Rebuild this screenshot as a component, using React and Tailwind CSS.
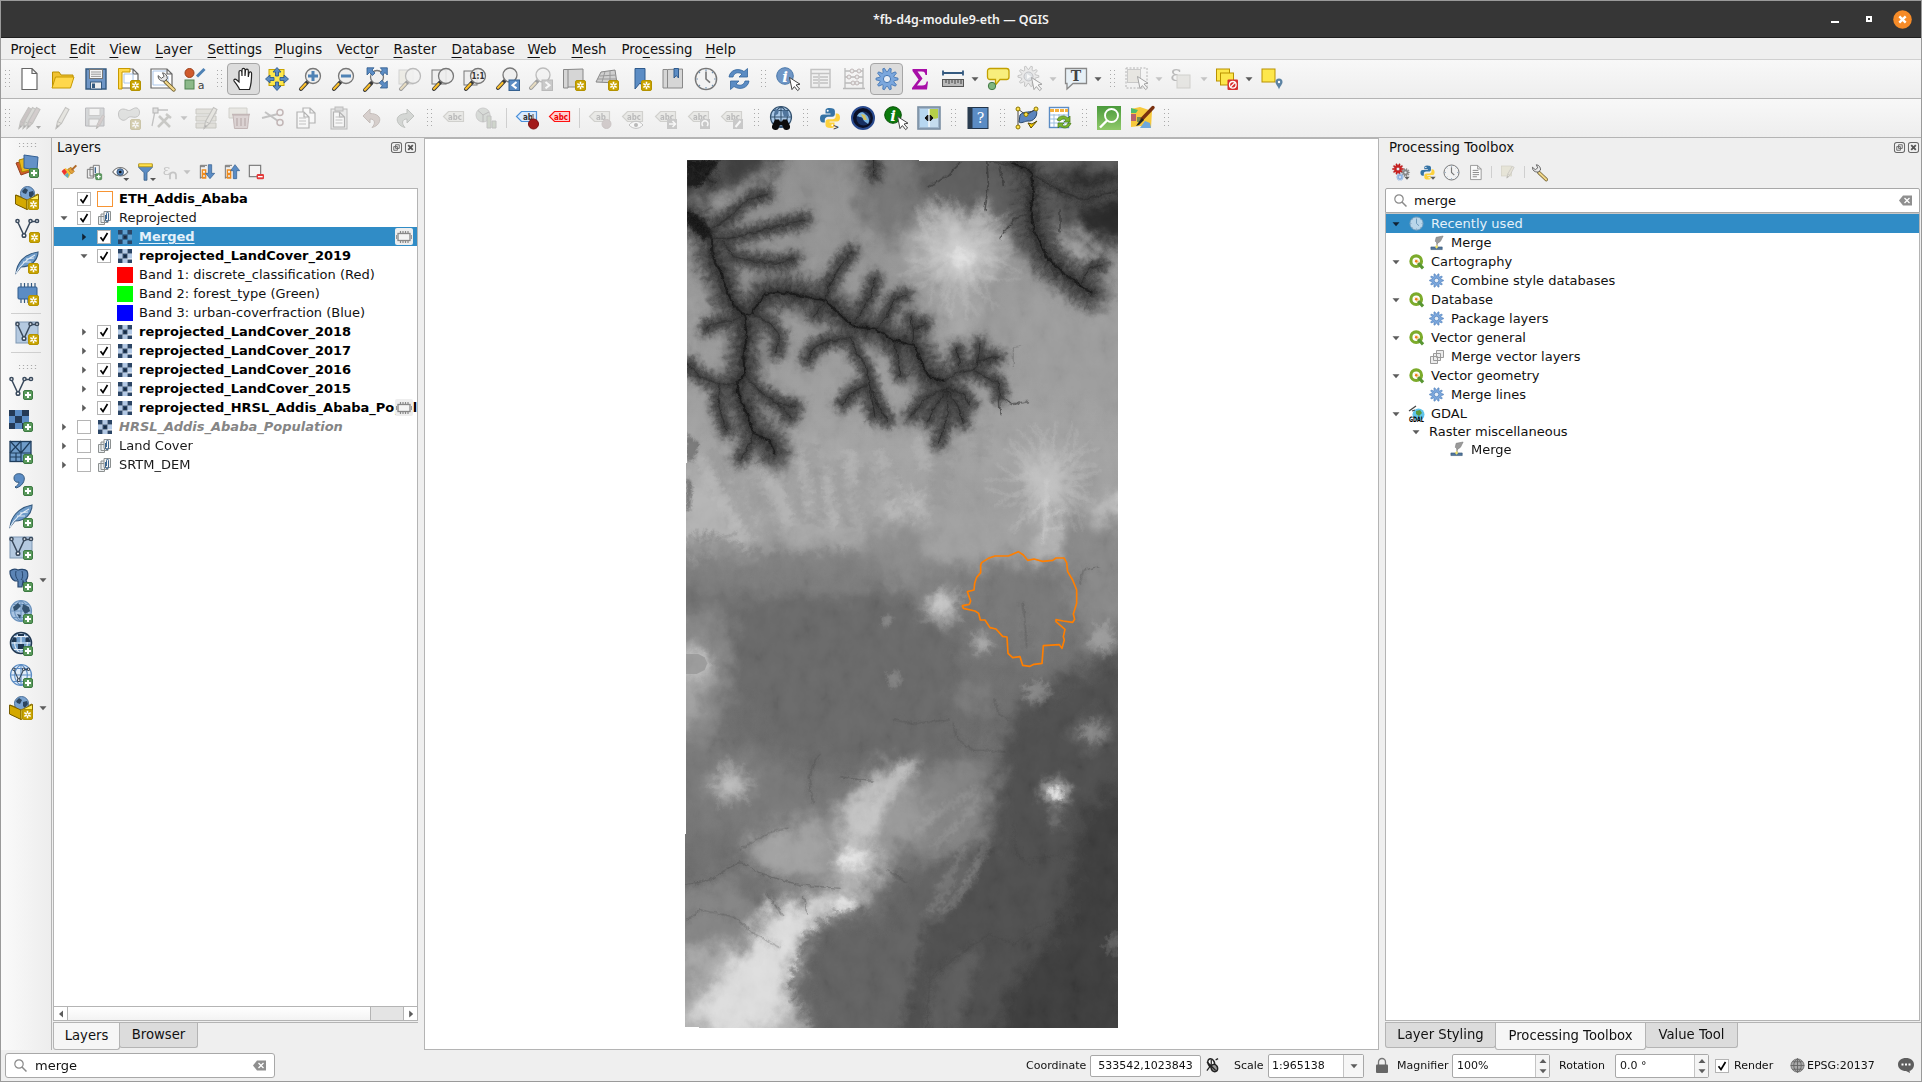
import React from "react";

/* ---------- small building blocks ---------- */

const S = ({ w = 24, h, vb, children, className = "" }) => (
  <svg width={w} height={h || w} viewBox={vb || "0 0 24 24"} fill="none" className={"block shrink-0 overflow-visible " + className}>
    {children}
  </svg>
);

const Star = ({ x = 13, y = 13 }) => (
  <g transform={`translate(${x} ${y})`}>
    <rect x="0.5" y="0.5" width="10" height="10" rx="1.5" fill="#c9a400" stroke="#b39200" />
    <path d="M5.5 1.8v7.4M2.3 3.6l6.4 3.8M8.7 3.6L2.3 7.4" stroke="#fff" strokeWidth="1.6" />
    <circle cx="5.5" cy="5.5" r="0.9" fill="#c9a400" />
  </g>
);

const Plus = ({ x = 14, y = 14 }) => (
  <g transform={`translate(${x} ${y})`}>
    <rect x="0.5" y="0.5" width="9" height="9" rx="1.5" fill="#5a9a5c" stroke="#3d7a42" />
    <path d="M5 2v6M2 5h6" stroke="#fff" strokeWidth="2" />
  </g>
);

const Glass = ({ cx = 14, cy = 9, r = 7.5, sign }) => (
  <g>
    <path d={`M${cx - 5.5} ${cy + 6}L${cx - 12} ${cy + 13}`} stroke="#3a3a3a" strokeWidth="4" strokeLinecap="round" />
    <path d={`M${cx - 7.5} ${cy + 8}L${cx - 12} ${cy + 12.8}`} stroke="#fbc02d" strokeWidth="2.2" strokeLinecap="round" />
    <circle cx={cx} cy={cy} r={r} fill="#eeeeeee0" stroke="#777" strokeWidth="1.3" />
    {sign}
  </g>
);

const Cursor = ({ x = 12, y = 10 }) => (
  <path
    transform={`translate(${x} ${y})`}
    d="M0.5 0.5L11 7.2L7 8L10.6 12L8.6 13.6L5.4 9.6L3 12.6Z"
    fill="#fff"
    stroke="#444"
    strokeWidth="1"
  />
);

const gearPath = (() => {
  let d = "";
  const n = 10;
  for (let i = 0; i < n * 4; i++) {
    const a = ((i - 0.5) / (n * 4)) * Math.PI * 2;
    const r = i % 4 < 2 ? 11 : 7.4;
    d += (i ? "L" : "M") + (12 + r * Math.cos(a)).toFixed(2) + " " + (12 + r * Math.sin(a)).toFixed(2);
  }
  return d + "Z";
})();

const Gear = ({ w = 24, fill = "#7ba7dd", stroke = "#4476b3", className }) => (
  <S w={w} className={className}>
    <path d={gearPath} fill={fill} stroke={stroke} strokeWidth="0.9" strokeLinejoin="round" />
    <circle cx="12" cy="12" r="3.6" fill="#e8eef6" stroke={stroke} strokeWidth="1" />
  </S>
);

const Clock = ({ w = 24, face = "#f2f2f2", ring = "#777" }) => (
  <S w={w}>
    <circle cx="12" cy="12" r="10.6" fill={face} stroke={ring} strokeWidth="1.4" />
    <path d="M12 4.5V12l4 3.6" stroke={ring} strokeWidth="1.6" />
    <path d="M12 2.3v1.6M12 20.1v1.6M2.3 12h1.6M20.1 12h1.6M5 5l1 1M19 5l-1 1M5 19l1-1M19 19l-1-1" stroke="#6d8fb0" strokeWidth="1.1" />
  </S>
);

const Python = ({ w = 24, extra }) => (
  <S w={w}>
    <path d="M11.5 2C8 2 7.5 3.4 7.5 5v2.5h5v1H5.2C3 8.5 2 10 2 12.5S3.200 16.500 5 16.500h1.800v-2.700c0-1.800 1.500-3.100 3.200-3.100h4.300c1.500 0 2.600-1.200 2.600-2.700V5c0-1.800-1.600-3-5.400-3Z" fill="#3673a5" />
    <path d="M12.500 22c3.500 0 4-1.400 4-3v-2.500h-5v-1h7.300c2.200 0 3.200-1.500 3.200-4s-1.200-4-3-4h-1.300v2.700c0 1.800-1.500 3.100-3.200 3.100h-4.300c-1.500 0-2.700 1.200-2.700 2.700V19c0 1.800 1.600 3 5 3Z" fill="#fdd13d" />
    <circle cx="9.700" cy="4.800" r="1" fill="#fff" />
    <circle cx="14.300" cy="19.300" r="1" fill="#fff" />
    {extra}
  </S>
);

const Vnodes = ({ c = "#39495c" }) => (
  <g stroke={c} strokeWidth="1.5">
    <path d="M2.500 3.500L9 17.500L15.500 3.500H22" />
    <circle cx="2.500" cy="3" r="1.600" fill="#fff" />
    <circle cx="9" cy="17.500" r="1.800" fill="#fff" />
    <circle cx="15.500" cy="3" r="1.600" fill="#fff" />
    <circle cx="22" cy="3" r="1.600" fill="#fff" />
  </g>
);

const Tag = ({ text = "abc", fill = "#dddcd0", stroke = "#a9a898", color = "#777", children }) => (
  <S>
    <path d="M6.500 5.500H21.500V15.500H6.500L1.500 10.500Z" fill={fill} stroke={stroke} strokeWidth="1.200" />
    <text x="13" y="13.500" fontSize="8.500" fontWeight="bold" textAnchor="middle" fontFamily="DejaVu Sans" fill={color} textLength={text.length > 2 ? 14 : 10} lengthAdjust="spacingAndGlyphs">
      {text}
    </text>
    {children}
  </S>
);

const Globe = ({ fill = "#7aa3d0", line = "#2f4f73", children }) => (
  <S>
    <circle cx="12" cy="11" r="10.500" fill={fill} stroke={line} strokeWidth="1.200" />
    <path d="M12 .5V21.500M1.500 11H22.500M4 4.500H20M4 17.500H20M12 .5C3.500 6 3.500 16 12 21.500M12 .5C20.500 6 20.500 16 12 21.500" stroke={line} strokeWidth="1.100" />
    {children}
  </S>
);

const Bolt = () => (
  <g>
    <path d="M1 9L12 13L23 8V18L12 23L1 18Z" fill="#fff176" stroke="#8a6d00" />
    <circle cx="12.500" cy="7.500" r="7" fill="#7aa3d0" stroke="#4a6f99" />
    <path d="M7 5l3-3 3 2-2 4-3-1ZM14 6l4-1 1 3-3 4-2-2Z" fill="#2d4660" />
    <path d="M.5 9L12 14V23.500L.5 18Z" fill="#d4a900" stroke="#7a5f00" />
    <path d="M12 14L23.500 8.500V18L12 23.500Z" fill="#ffee58" stroke="#8a6d00" />
  </g>
);

const Checker = ({ w = 14, dim }) => (
  <S w={w} vb="0 0 14 14">
    <rect width="14" height="14" fill={dim ? "#308cc6" : "#ffffff"} />
    <path d="M0 4.500h4.500v5H0ZM9.500 4.500H14v5H9.500ZM4.500 9.500h5V14h-5ZM4.500 0h5v4.500h-5Z" fill={dim ? "#5f9fd0" : "#b4cae6"} />
    <path d="M0 0h4.500v4.500H0ZM9.500 0H14v4.500H9.500ZM4.500 4.500h5v5h-5ZM0 9.500h4.500V14H0ZM9.500 10.500H14V14H9.500Z" fill="#2b4566" />
    <path d="M6 6h2.500v2.500H6Z" fill="#172a40" />
  </S>
);

const GroupIcon = () => (
  <S w={16} vb="0 0 16 16">
    <path d="M1.500 6.500h6v8h-6ZM4 4h7v8.500H4Z" fill="#eceff1" stroke="#8c9090" />
    <path d="M7 1.500h6.500v9H7Z" fill="#f4f4f4" stroke="#8c9090" />
    <path d="M8.500 5v5a1.500 1.500 0 0 0 3 0V3.300a1 1 0 0 0-2 0V9" stroke="#3c6690" strokeWidth="1" />
  </S>
);

const Chip = ({ w = 16 }) => (
  <S w={w} h={14} vb="0 0 16 14">
    <rect x="2" y="3.500" width="12" height="7" fill="#f4f4f4" stroke="#888" strokeWidth="1.300" />
    <path d="M.5 5v4M15.500 5v4" stroke="#999" strokeWidth="1" />
    <path d="M4.500 3V1M7 3V1M9.500 3V1M12 3V1M4.500 13v-2M7 13v-2M9.500 13v-2M12 13v-2" stroke="#888" strokeWidth="1.200" />
  </S>
);

const Tri = ({ dir = "down", c = "#5c5c5c" }) => (
  <S w={8} vb="0 0 8 8">
    <path d={dir === "down" ? "M0.500 2.200H7.500L4 6.200Z" : dir === "up" ? "M0.500 6H7.500L4 2Z" : dir === "left" ? "M6 .5V7.500L2 4Z" : "M2.200 .5V7.500L6.200 4Z"} fill={c} />
  </S>
);

const Page = ({ x = 4, y = 1.5, w = 15, h = 21 }) => (
  <path d={`M${x} ${y}h${w - 5}l5 5v${h - 5}h${-w}Z M${x + w - 5} ${y}v5h5`} fill="#fff" stroke="#666" strokeWidth="1.200" />
);

const Pencil = ({ x = 0, c = "#d9d3bb" }) => (
  <g transform={`translate(${x} 0)`}>
    <path d="M5 22.500L6.500 15.500L14.500 1.500L18 3.500L10.500 17.500Z" fill={c} stroke="#8a867a" strokeWidth="1.100" />
    <path d="M5 22.500l1.200-3.500 2 1.200ZM6.500 15.500l4 2" fill="#555" stroke="#8a867a" />
  </g>
);

const Wrench = () => (
  <g>
    <path d="M11 12L21.500 22" stroke="#6a5a2a" strokeWidth="5" strokeLinecap="round" />
    <path d="M11.500 12.500L21.500 22" stroke="#f0d68a" strokeWidth="3" strokeLinecap="round" />
    <path d="M2 4.500c0 5 3 7 8 7l3.500-3c0-4-2-7-6-7.500l2 4.500-3.500 2.500Z" fill="#e8e8e8" stroke="#555" strokeWidth="1.200" />
  </g>
);

/* ---------- icon catalogue ---------- */

const I = {
  newp: <S><Page /></S>,
  open: <S w={25} vb="0 0 25 24"><path d="M2.500 20V4.500H9l2 3h12V10" fill="#f1c232" stroke="#b98f00" /><path d="M2 20.500L5.500 9.500H24L20.500 20.500Z" fill="#ffd84d" stroke="#c79a00" /></S>,
  save: <S><path d="M2 2H22V22H2Z" fill="#6f96c6" stroke="#34597f" strokeWidth="1.400" /><rect x="5.500" y="2.500" width="13" height="9" fill="#f5f5f5" stroke="#777" /><path d="M7 5h10M7 7.200h10M7 9.400h10" stroke="#999" /><rect x="6.500" y="15" width="11" height="7" fill="#eee" stroke="#34597f" /><rect x="8" y="16.500" width="3" height="4.500" fill="#34597f" /></S>,
  print: <S><Page x={3} y={2} w={18} h={19} /><path d="M1.500 1.500H13V5H5V22H1.500Z" fill="#ffd84d" stroke="#c79a00" /><path d="M7 7h9v9H7Z" stroke="#aac6ea" /><Star /></S>,
  layout: <S><Page x={1} y={2} w={21} h={19} /><path d="M3 4h13M3 4v14h15V9" stroke="#aac6ea" /><g transform="translate(6.500 5) scale(.8)"><Wrench /></g></S>,
  style: <S><circle cx="6.500" cy="6" r="4.500" fill="#d05a2c" stroke="#9d3f1a" /><path d="M14 9.500L21.500 2" stroke="#4f82b5" strokeWidth="3" /><rect x="2" y="13" width="9" height="9" fill="#8cb98a" stroke="#4f8250" /><text x="18" y="22" fontFamily="DejaVu Sans" fontSize="11" fill="#444" textAnchor="middle">a</text></S>,
  hand: <S><path d="M7.500 22.500c-1-3-4-6.500-5.500-8.500-.6-1.500 1-2.500 2.500-1.200L7 15V5c0-2 2.500-2 2.800 0L10 9V2.800c.2-2 2.800-2 3 0V9l.5-5.500c.3-1.900 2.700-1.700 2.800.2V10l.7-4c.5-1.700 2.600-1.400 2.600.5 0 5-.3 11-2.100 16Z" fill="#fff" stroke="#222" strokeWidth="1.200" /></S>,
  panmap: <S><rect x="4" y="2.500" width="15" height="16" fill="#fde74c" stroke="#c9a400" /><g fill="#5b8cc4" stroke="#2f5a8c" strokeWidth=".9"><path d="M12 .5l4 4.500h-2.500v4h-3V5H8ZM12 23.500l4-4.500h-2.500v-4h-3v4H8ZM.5 12L5 8v2.500h4v3H5V16ZM23.500 12L19 8v2.500h-4v3h4V16Z" /></g></S>,
  zin: <S><Glass cx={15} sign={<path d="M15 4v10M10 9h10" stroke="#4f82b5" strokeWidth="3" />} /></S>,
  zout: <S><Glass cx={15} sign={<path d="M10 9h10" stroke="#4f82b5" strokeWidth="3" />} /></S>,
  zfull: <S><Glass cx={13} cy={10} r={6.500} /><g fill="#5b8cc4" stroke="#2f5a8c" strokeWidth=".8"><path d="M3 .8h7L8 3l3 3-2.500 2.500-3-3L3 8ZM23.300 .8h-7l2 2.200-2 3 2.500 2.500 2-3L23.300 8ZM23.300 21h-7l2-2.200-3-3 2.500-2.500 3 3 2.500-2.300Z" /></g></S>,
  zsel: <S><rect x="2" y="3" width="14" height="14" fill="#e7e3c0" stroke="#aaa" /><Glass cx={16} /></S>,
  zlay: <S><rect x="2" y="3" width="14" height="14" fill="#eee" stroke="#777" /><Glass cx={16} /></S>,
  z11: <S><rect x="1" y="4" width="13" height="14" fill="#eee" stroke="#777" /><Glass cx={15} sign={<text x="15" y="12.200" fontFamily="DejaVu Sans" fontWeight="bold" fontSize="8.500" fill="#333" textAnchor="middle" textLength="13" lengthAdjust="spacingAndGlyphs">1:1</text>} /></S>,
  zlast: <S><Glass cx={14} cy={8} r={7} /><rect x="13" y="13" width="10.500" height="10.500" fill="#5b8cc4" stroke="#35608f" /><path d="M20.500 15l-4 3.200 4 3.200" stroke="#fff" strokeWidth="2" /></S>,
  znext: <S><Glass cx={14} cy={8} r={7} /><rect x="13" y="13" width="10.500" height="10.500" fill="#999" stroke="#777" /><path d="M16.500 15l4 3.200-4 3.200" stroke="#fff" strokeWidth="2" /></S>,
  newmap: <S><path d="M1.500 2.500H6V21H1.500ZM6 2.500l15-.5v18H6" fill="#d6d6d6" stroke="#888" /><Star /></S>,
  map3d: <S><path d="M6 5L20 3L22 16L1 15Z" fill="#cfcfcf" stroke="#888" /><path d="M5 9l16-1M3 12l18 0M10 4.500L7 15M15 4l0 12" stroke="#999" /><Star /></S>,
  bmnew: <S><path d="M7 1.500H17V22L12 16L7 22Z" fill="#5b8cc4" stroke="#2f5a8c" /><Star x={13} y={13} /></S>,
  bm: <S><path d="M2 2.500H6.500V21H2ZM6.500 2.500l15-.5v19h-15" fill="#d6d6d6" stroke="#888" /><path d="M13 1.500h4.500V11l-2.200-2.500L13 11Z" fill="#5b8cc4" stroke="#2f5a8c" /></S>,
  clock: <Clock />,
  refresh: <S><path d="M2 10C3 3 11 .5 17 4.500L20.500 1.500V10H12L15 7C11 4.500 7 6 6 10Z" fill="#5b8cc4" stroke="#33669c" strokeWidth=".8" /><path d="M22 14C21 21 13 23.500 7 19.500L3.500 22.500V14H12L9 17c4 2.500 8 1 9-3Z" fill="#5b8cc4" stroke="#33669c" strokeWidth=".8" /></S>,
  ident: <S><circle cx="9" cy="9" r="8.300" fill="#6f96c6" stroke="#4a78aa" /><text x="9" y="14.500" fontFamily="DejaVu Serif" fontStyle="italic" fontWeight="bold" fontSize="15" fill="#fff" textAnchor="middle">i</text><Cursor x={13} y={10} /></S>,
  table: <S><rect x="2" y="2.500" width="19" height="18" fill="#eee" stroke="#888" strokeWidth="1.500" /><path d="M2 6.500h19M4 10h5M11 10h8M4 13h5M11 13h8M4 16h5M11 16h8M10 7v13" stroke="#888" strokeWidth="1.300" /></S>,
  abacus: <S><path d="M3 1v21M21 1v21M3 4h18M3 10h18M3 16h18M1 21.500h22" stroke="#777" strokeWidth="1.300" /><g fill="#ddd" stroke="#966" ><circle cx="10" cy="4" r="2" /><circle cx="17" cy="4" r="2" /><circle cx="7" cy="10" r="2" /><circle cx="11" cy="16" r="2" /><circle cx="15" cy="16" r="2" /><circle cx="15" cy="10" r="2" /></g></S>,
  gear: <Gear />,
  sigma: <S><path d="M4.500 2H19V8H17.500C17 5 16 4.500 13 4.500H9.500L14.500 11.500L9 18.500H14c3 0 4-1 4.700-4H20L19 22.500H4V21L10.500 12.500L4.500 4Z" fill="#a80fa8" /></S>,
  measure: <S><path d="M2 6h20M2 3.500v5M22 3.500v5" stroke="#34597f" strokeWidth="1.800" /><rect x="1.500" y="12.500" width="21" height="7" fill="#b9b9b9" stroke="#555" /><path d="M5 13v3M8 13v4M11 13v3M14 13v4M17 13v3M20 13v4" stroke="#444" /></S>,
  tip: <S><path d="M4 1.500H20.500A2.500 2.500 0 0 1 23 4V10A2.500 2.500 0 0 1 20.500 12.500H14L9.500 18V12.500H4A2.500 2.500 0 0 1 1.500 10V4A2.500 2.500 0 0 1 4 1.500Z" fill="#f8ee7c" stroke="#c2a000" strokeWidth="1.300" /><circle cx="6" cy="19" r="3.700" fill="#7fb57f" stroke="#437a46" /></S>,
  action: <S><path d={gearPath} fill="#ddd" stroke="#888" transform="translate(-2 -2) scale(.95)" /><circle cx="9.500" cy="9.500" r="4.500" fill="#bcd" stroke="#889" /><path d="M8 7v5l4-2.500Z" fill="#fff" /><Cursor x={12} y={10} /></S>,
  text: <S><path d="M1.500 1.500H22.500V16.500H9L3 22V16.500H1.500Z" fill="#e7f0f6" stroke="#888" strokeWidth="1.300" /><text x="12" y="14" fontFamily="DejaVu Serif" fontWeight="bold" fontSize="14" fill="#444" textAnchor="middle">T</text></S>,
  select: <S><rect x="2.500" y="2.500" width="13" height="13" fill="#ded6bd" stroke="#999" /><path d="M1 1h21v20H1Z" stroke="#666" strokeDasharray="2 1.500" /><Cursor x={12} y={9} /></S>,
  eps: <S><text x="6" y="14" fontFamily="DejaVu Serif" fontSize="22" fill="#777" textAnchor="middle">ε</text><rect x="7" y="8" width="13" height="13" fill="#dad6c6" stroke="#aaa696" /></S>,
  desel: <S><rect x="1.500" y="2" width="13" height="12" fill="#fde74c" stroke="#b99200" /><rect x="5.500" y="6" width="13" height="12" fill="#fde74c" stroke="#b99200" /><rect x="12.500" y="12.500" width="10.500" height="10.500" rx="1" fill="#d62f2f" /><circle cx="17.800" cy="17.800" r="3.300" stroke="#fff" strokeWidth="1.300" /><path d="M15.500 20l4.600-4.600" stroke="#fff" strokeWidth="1.300" /></S>,
  selpin: <S><rect x="2" y="2" width="13" height="13" fill="#fde74c" stroke="#b99200" /><path d="M19 11.500a3.500 3.500 0 0 1 3.500 3.500c0 2.500-2.500 4-3.500 7.500-1-3.500-3.500-5-3.500-7.500a3.500 3.500 0 0 1 3.500-3.500Z" fill="#5c83a3" /><circle cx="19" cy="15" r="1.200" fill="#fff" /></S>,
  pencils: <S><Pencil x={-4} c="#a88" /><Pencil x={0} c="#bba" /><Pencil x={4} c="#b99" /><path d="M18 20h5l-2.500 3Z" fill="#555" /></S>,
  pencil: <S><Pencil /></S>,
  saveEd: <S><path d="M1.500 2H20V20H1.500Z" fill="#aab4bd" stroke="#778" /><rect x="5" y="2.500" width="11" height="7" fill="#f2f2f2" stroke="#999" /><rect x="5" y="13" width="10" height="7" fill="#eee" stroke="#888" /><g transform="translate(9 8) scale(.65)"><Pencil c="#c99" /></g></S>,
  addpoly: <S><path d="M1.500 8C1.500 3 6 2 10 4c4 2 6-3 10-2 3 1 3.500 7 .5 8.500-3 2-6-.5-8.500.5-2.500 2-4 4-7 3-2.500-1-3.500-3-3.500-6Z" fill="#c4cbc4" stroke="#888" /><Star /></S>,
  vertex: <S><path d="M5 4H18M5 5L2 20" stroke="#888" strokeWidth="1.300" /><rect x="3" y="2" width="5" height="5" fill="#ccc" stroke="#666" /><path d="M8 21L19 10M9 10l11 11M16 8l5 4" stroke="#998" strokeWidth="2.600" /></S>,
  multi: <S><path d="M1 3h20v5H1ZM1 10h20v5H1ZM1 17h20v5H1Z" fill="#cfcbae" stroke="#999678" /><g transform="translate(4 0)"><Pencil /></g></S>,
  trash: <S><path d="M1 2h18v10H1Z" fill="#ddd8c0" stroke="#aaa48a" /><path d="M5 9h16l-1.500 13.500h-13Z" fill="#d8a8a8" stroke="#a66" /><path d="M4 8.500h18M9 12v8M13 12v8M17 12v8" stroke="#a66" strokeWidth="1.600" /></S>,
  cut: <S><path d="M1 12L17 8M4 6L17 15" stroke="#888" strokeWidth="2" /><ellipse cx="19" cy="6.500" rx="3" ry="3" stroke="#a66" strokeWidth="1.500" /><ellipse cx="19" cy="16.500" rx="3" ry="3" stroke="#a66" strokeWidth="1.500" /></S>,
  copy: <S><Page x={9} y={2} w={12} h={15} /><Page x={3} y={6} w={12} h={16} /><path d="M5 12h7M5 15h7M5 18h7" stroke="#888" /></S>,
  paste: <S><rect x="4" y="3" width="16" height="20" fill="#ddd" stroke="#777" /><rect x="8" y="1" width="8" height="4" fill="#bbb" stroke="#777" /><Page x={6.500} y={6} w={11} h={15} /><path d="M8.500 11h7M8.500 14h7M8.500 17h7" stroke="#888" /></S>,
  undo: <S><path d="M3 10L10 3V7.500C17 7.500 21 11 19.500 15.500C18.500 18.500 16 20.500 12 21.500C15.500 18 15.500 13 10 13V17Z" fill="#c99f90" stroke="#a07868" /></S>,
  redo: <S><path d="M21 10L14 3V7.500C7 7.500 3 11 4.500 15.500C5.500 18.500 8 20.500 12 21.500C8.500 18 8.500 13 14 13V17Z" fill="#a9b9a9" stroke="#7a8a7a" /></S>,
  tag: <Tag />,
  diag: <S><circle cx="8" cy="9" r="7" fill="#aebfae" stroke="#999" /><path d="M8 9L3 4.500M8 9l6-3M8 9v7" stroke="#777" /><path d="M12 10h4v12h-4ZM17 15h4v7h-4Z" fill="#9b8" stroke="#888" /></S>,
  tagPin: <Tag text="ab" fill="#d9eaff" stroke="#4a90d9" color="#333"><path d="M18 14V8" stroke="#999" strokeWidth="2" /><circle cx="18.500" cy="18" r="5" fill="#a31b1b" stroke="#7c1010" /></Tag>,
  tagRed: <Tag fill="#ffd0d0" stroke="#ff1010" color="#e00"><g /></Tag>,
  tag1: <Tag text="ab"><circle cx="18.500" cy="18" r="4.500" fill="#b99" stroke="#a88" /></Tag>,
  tag2: <Tag><path d="M8 19c4-5 10-5 14 0-4 4.500-10 4.500-14 0Z" fill="#fff" stroke="#888" /><circle cx="15" cy="19" r="2" fill="#777" /></Tag>,
  tag3: <Tag><rect x="13" y="13" width="10" height="10" fill="#999" /><path d="M15 18h6M18.500 15l3 3-3 3" stroke="#fff" strokeWidth="1.500" /></Tag>,
  tag4: <Tag><rect x="13" y="13" width="10" height="10" fill="#999" /><path d="M16 20a3 3 0 1 1 4 0" stroke="#fff" strokeWidth="1.500" /></Tag>,
  tag5: <Tag><rect x="13" y="13" width="10" height="10" fill="#999" /><path d="M15.500 21l5-6" stroke="#fff" strokeWidth="2" /></Tag>,
  meta: <Globe fill="#a9c7e6" line="#34526f"><path d="M6 3l4 1-1 4-4 2ZM13 4l6 1 1 5-5 1Z" fill="#51759c" /><path d="M6 13.500h4l1 2h2l1-2h4l3 6.500a3.500 3.500 0 0 1-7 1l-1-2h-2l-1 2a3.500 3.500 0 0 1-7-1Z" fill="#0b0b0b" /></Globe>,
  python: <Python extra={<text x="18" y="23.500" fontFamily="DejaVu Sans Mono" fontSize="9" fontWeight="bold" fill="#444" textAnchor="middle">&gt;</text>} />,
  earth: <S><circle cx="12" cy="12" r="11" fill="#0b1026" stroke="#294a8e" strokeWidth="2" /><circle cx="12.500" cy="12.500" r="7" fill="#173063" /><path d="M6 10c2-4 6-5 8-2 4 2 5 7 3 10-2-2-4-2-5-5s-4-1-6-3Z" fill="#7db6e0" /><path d="M10 8l4 1 2 5-3 0Z" fill="#d6c35e" /></S>,
  info2: <S><circle cx="9" cy="9" r="8.300" fill="#0b7a0b" stroke="#065006" /><text x="9" y="14.500" fontFamily="DejaVu Serif" fontStyle="italic" fontWeight="bold" fontSize="15" fill="#fff" textAnchor="middle">i</text><Cursor x={13} y={10} /></S>,
  swipe: <S><rect x="1" y="1" width="22" height="22" fill="#9fb6cc" stroke="#7b8fa3" strokeWidth="1.600" /><rect x="3" y="3" width="9" height="18" fill="#b7d7f1" /><rect x="12" y="3" width="9" height="18" fill="#c5dcee" /><path d="M12 3h9v9c-4 2-7 0-9-3Z" fill="#b5cf4a" /><path d="M12 3v18" stroke="#fff" strokeWidth="1.300" /><path d="M10.800 9v6L8 12ZM13.200 9v6l2.800-3Z" fill="#111" stroke="#111" /></S>,
  help: <S><rect x="2" y="1.500" width="20" height="21" fill="#5b8cc4" stroke="#223449" /><rect x="2" y="1.500" width="4.500" height="21" fill="#2a3c50" /><text x="14.500" y="17" fontFamily="DejaVu Serif" fontSize="14" fill="#fff" textAnchor="middle">?</text></S>,
  topo: <S><path d="M4 16L5 9C9 4 16 8 21 3C24 10 18 16 13 15C10 15 6 18 4 16Z" fill="#5b84bd" stroke="#27476e" /><path d="M3 20L3 3M3 3L11 9L21 3" stroke="#444" /><g fill="#ffe14d" stroke="#8a7500"><circle cx="3" cy="3" r="2" /><circle cx="21" cy="3" r="2" /><circle cx="11" cy="8.500" r="2" /><circle cx="3" cy="21" r="2" /></g><path d="M13 17l3 5 6-7-5 3Z" fill="#fdd100" stroke="#5a4a00" /></S>,
  tblref: <S><rect x="1.500" y="1.500" width="19" height="20" fill="#fff" stroke="#5b8cc4" strokeWidth="1.400" /><path d="M2 4.500h18" stroke="#f6b13d" strokeWidth="3" strokeDasharray="4 1" /><path d="M2 9h18M2 13h18M2 17h18M6 8v13M11 8v13M16 8v13" stroke="#9dbfe0" /><path d="M9 14c2-5 8-5 11-2l2-2v6h-6l2-2c-2-2-4-1-6 1ZM23 17c-2 6-8 6-11 3l-2 2v-5h6l-2 2c2 2 5 1 6-2Z" fill="#78b52f" stroke="#467a12" strokeWidth=".7" /></S>,
  green: <S><defs><linearGradient id="gq" x1="0" y1="0" x2="0" y2="1"><stop offset="0" stopColor="#4a9a3c" /><stop offset="1" stopColor="#90c96a" /></linearGradient></defs><rect width="24" height="24" fill="url(#gq)" /><circle cx="14.500" cy="9.500" r="6.500" stroke="#fff" strokeWidth="1.900" /><path d="M10 14.500L3 21.500" stroke="#fff" strokeWidth="2.400" /></S>,
  style2: <S><path d="M1 3l9-2 12 4-1 17-11-2-9 1Z" fill="#f7c93c" /><path d="M1 2l7 2-2 3H1Z" fill="#4dbb6a" /><path d="M1 8h5v7H1Z" fill="#b8606a" /><path d="M7 11h4v5H7Z" fill="#7b8f4f" /><path d="M10 22l5-7 5 2 1 5Z" fill="#6fa8dc" /><path d="M23 1.500L12 13" stroke="#7a3110" strokeWidth="3.400" strokeLinecap="round" /><path d="M12 12l2 2-5 5-3 1 2-3Z" fill="#222" /></S>,
};

const L = {
  dsm: <S><path d="M1 9l11-3 5 11-11 4Z" fill="#d05a2c" stroke="#93401c" /><path d="M4 6l11-3 4 12-12 3Z" fill="#e9b91c" stroke="#a88200" /><path d="M9 1l14 2-1 13-13-2Z" fill="#6391c7" stroke="#335f92" /><Plus /></S>,
  gpkg: <S><Bolt /><Star /></S>,
  vnew: <S><Vnodes /><Star x={14} y={14} /></S>,
  feather: <S><path d="M1 23C2 14 8 4 23 2C23 10 16 17 6 17Z" fill="#6f9cc9" stroke="#34597f" strokeWidth="1.100" /><path d="M1 23C6 14 12 9 20 5M8 12l8 0M11 9l8-1" stroke="#dfeaf5" strokeWidth="1.100" /><Star /></S>,
  chip: <S><path d="M6 1v20M9.500 1v20M13 1v20M16.500 1v20M20 1v20" stroke="#34597f" strokeWidth="1.200" /><rect x="3" y="5" width="19" height="12" rx="1" fill="#5b8cc4" stroke="#2f5a8c" /><Star /></S>,
  vbox: <S><rect x="1" y="1" width="22" height="21" fill="#b4c9e0" stroke="#7f98b3" /><Vnodes /><Star /></S>,
  vadd: <S><Vnodes /><Plus /></S>,
  radd: <S><path d="M0 2h20v19H0Z" fill="#5b8cc4" /><path d="M0 2h6v6H0ZM13 2h7v6h-7ZM6 8h7v7H6ZM0 15h6v6H0ZM13 15h7v6h-7Z" fill="#243a56" /><Plus /></S>,
  mesh: <S><rect x="1" y="1.500" width="21" height="20" fill="#6f9cc9" stroke="#1f3d5c" strokeWidth="1.300" /><path d="M1 13h21M12 1v20M1 1l11 12M12 1L1 13M22 1L12 13M7 13v8M1 17h11" stroke="#1f3d5c" strokeWidth="1.200" /><Plus /></S>,
  comma: <S><path d="M5 6c0-4 4-5 7-4 4 1 4 6 2 9-2 3-4 4-7 5l-1-1c2-1 4-3 4-5-3 1-5-1-5-4Z" fill="#5b8cc4" stroke="#34597f" /><Plus /></S>,
  feather2: <S><path d="M1 23C2 14 8 4 23 1C23 10 16 17 6 17Z" fill="#6f9cc9" stroke="#34597f" strokeWidth="1.100" /><path d="M1 23C6 14 12 9 20 5M8 12l8 0M11 9l8-1" stroke="#dfeaf5" strokeWidth="1.100" /><Plus /></S>,
  vbox2: <S><rect x="1" y="1" width="22" height="21" fill="#b4c9e0" stroke="#7f98b3" /><Vnodes /><Plus /></S>,
  pg: <S><path d="M1 3c3-2.500 6-2 8-1 2-1 7-1 9 1 1.500 3 1 7-1 9l1 3h-3l-1-2-1 6H9V13H6C3 12 .5 7 1 3Z" fill="#5b84b5" stroke="#27476e" strokeWidth="1.200" /><path d="M7 3c-1 4 0 7 2 9M13 3c1 4 1 7-1 9" stroke="#27476e" /><Plus /></S>,
  wms: <Globe fill="#a9c4e2" line="#6c93bd"><path d="M4 7l5-4 3 3-4 4-3 1ZM14 4l6 3 1 4-5 3-3-5ZM8 14l4 1-1 4Z" fill="#34526f" /><Plus /></Globe>,
  wcs: <Globe fill="#6f9cc9" line="#e6eef7"><circle cx="12" cy="11" r="10.500" stroke="#1f3650" strokeWidth="1.500" /><path d="M4 5.500h3.500v4.500H2.500ZM16.500 5.500h3.500l1.500 4.500h-5ZM9 12h6v5H9ZM9 2h6v2H9Z" fill="#1f3650" /><Plus /></Globe>,
  wfs: <Globe fill="#e3edf8" line="#5b8cc4"><g transform="translate(3 3) scale(.75)"><Vnodes /></g><Plus /></Globe>,
};

/* ---------- toolbars ---------- */

const Grip = ({ className = "w-4" }) => (
  <div className={"flex h-8 shrink-0 items-center justify-center " + className}>
    <svg width="5" height="18" viewBox="0 0 5 18" className="block">
      {[0, 1, 2, 3, 4].map((i) => (
        <path key={i} d={`M0 ${i * 4 + 0.5}h1M4 ${i * 4 + 0.5}h1`} stroke="#aaa" strokeWidth="1.200" />
      ))}
    </svg>
  </div>
);

const Bar = ({ items }) => (
  <div className="flex h-[39px] shrink-0 items-center border-b border-[#b4b4b4] bg-linear-to-b from-[#f8f8f8] to-[#eeeeee] pl-px">
    {items.map((it, i) => {
      if (it === "|") return <Grip key={i} className={i === 0 ? "w-[11px]" : "w-4"} />;
      if (it === ":") return <div key={i} className="flex h-5 w-[7px] justify-center"><div className="w-px bg-[#cfcfcf]" /></div>;
      if (it === "v" || it === "V")
        return <div key={i} className={"flex w-3 justify-center " + (it === "v" ? "opacity-30" : "")}><Tri /></div>;
      const off = it[0] === "-";
      const on = it[0] === "+";
      const name = off || on ? it.slice(1) : it;
      return (
        <div key={i} className={"flex h-8 w-[33px] shrink-0 items-center justify-center " + (on ? "rounded-sm border border-[#a6a6a6] bg-[#dcdcdc]" : "")}>
          <div className={off ? "opacity-45 grayscale-60" : ""}>{I[name]}</div>
        </div>
      );
    })}
  </div>
);

const ROW1 = "| newp open save print layout style | +hand panmap zin zout zfull -zsel zlay z11 zlast -znext newmap map3d bmnew bm clock refresh | ident -table -abacus +gear sigma measure V tip -action v text V | -select v -eps v desel V selpin".split(" ");
const ROW2 = "| -pencils -pencil -saveEd -addpoly -vertex v -multi -trash -cut -copy -paste -undo -redo | -tag -diag : tagPin tagRed : -tag1 -tag2 -tag3 -tag4 -tag5 | meta | python earth info2 swipe | help | topo tblref | green style2 |".split(" ");

const MENU = [
  ["Pro", "j", "ect", "w-[59px]"], ["", "E", "dit", "w-[40px]"], ["", "V", "iew", "w-[46px]"], ["", "L", "ayer", "w-[52px]"],
  ["", "S", "ettings", "w-[67px]"], ["", "P", "lugins", "w-[62px]"], ["Vect", "o", "r", "w-[57px]"], ["", "R", "aster", "w-[58px]"],
  ["", "D", "atabase", "w-[76px]"], ["", "W", "eb", "w-[44px]"], ["", "M", "esh", "w-[50px]"], ["Pro", "c", "essing", "w-[84px]"], ["", "H", "elp", "w-[50px]"],
];

const SideItem = ({ icon, arrow, first }) => (
  <div className={"flex h-8 items-center " + (first ? "pl-3.5" : "pl-2")}>
    {icon}
    {arrow && <div className="ml-[6px]"><Tri /></div>}
  </div>
);

const SideGrip = () => (
  <svg width="18" height="5" viewBox="0 0 18 5" className="ml-[18px] block">
    {[0, 1, 2, 3, 4].map((i) => (
      <path key={i} d={`M${i * 4 + 0.5} 0v1M${i * 4 + 0.5} 3v1`} stroke="#aaa" strokeWidth="1.200" />
    ))}
  </svg>
);

const SideBar = () => (
  <div className="flex w-[51px] shrink-0 flex-col border-r border-[#b4b4b4] bg-linear-to-r from-[#fafafa] to-[#ededed] pt-[5px]">
    <SideGrip />
    <div className="h-0.5" />
    {["dsm", "gpkg", "vnew", "feather", "chip"].map((k) => <SideItem key={k} icon={L[k]} first />)}
    <div className="mx-2.5 my-[3px] h-px bg-[#cfcfcf]" />
    <SideItem icon={L.vbox} first />
    <div className="mx-2.5 mt-[3px] mb-3 h-px bg-[#cfcfcf]" />
    <SideGrip />
    <div className="h-0.5" />
    {["vadd", "radd", "mesh", "comma", "feather2", "vbox2", "pg", "wms", "wcs", "wfs"].map((k) => (
      <SideItem key={k} icon={L[k]} arrow={k === "pg"} />
    ))}
    <SideItem icon={L.gpkg} arrow />
  </div>
);

/* ---------- panels ---------- */

const TitleButtons = () => (
  <div className="flex gap-[3px]">
    <S w={11}><rect x="1" y="1" width="22" height="22" rx="5" stroke="#666" strokeWidth="2.200" /><path d="M10 6h8v8h-8ZM6 10h8v8H6Z" stroke="#666" strokeWidth="2" /></S>
    <S w={11}><rect x="1" y="1" width="22" height="22" rx="5" stroke="#666" strokeWidth="2.200" /><path d="M7 7l10 10M17 7L7 17" stroke="#555" strokeWidth="4" /></S>
  </div>
);

const Check = ({ on, className = "" }) => (
  <div className={"flex size-[14px] shrink-0 items-center justify-center border border-[#b4b4b4] bg-white " + className}>
    {on && <S w={10} vb="0 0 10 10"><path d="M1.500 5.200L4 8.500L8.500 1" stroke="#000" strokeWidth="1.700" /></S>}
  </div>
);

const LAYERS = [
  { l: 1, on: 1, icon: "box", t: "ETH_Addis_Ababa", b: 1 },
  { l: 1, a: "down", on: 1, icon: "grp", t: "Reprojected" },
  { l: 2, a: "right", on: 1, icon: "ras", t: "Merged", sel: 1, chip: 1 },
  { l: 2, a: "down", on: 1, icon: "ras", t: "reprojected_LandCover_2019", b: 1 },
  { band: "bg-[#ff0000]", t: "Band 1: discrete_classification (Red)" },
  { band: "bg-[#00ff00]", t: "Band 2: forest_type (Green)" },
  { band: "bg-[#0000ff]", t: "Band 3: urban-coverfraction (Blue)" },
  { l: 2, a: "right", on: 1, icon: "ras", t: "reprojected_LandCover_2018", b: 1 },
  { l: 2, a: "right", on: 1, icon: "ras", t: "reprojected_LandCover_2017", b: 1 },
  { l: 2, a: "right", on: 1, icon: "ras", t: "reprojected_LandCover_2016", b: 1 },
  { l: 2, a: "right", on: 1, icon: "ras", t: "reprojected_LandCover_2015", b: 1 },
  { l: 2, a: "right", on: 1, icon: "ras", t: "reprojected_HRSL_Addis_Ababa_Population", b: 1, chip: 1 },
  { l: 1, a: "right", icon: "ras", t: "HRSL_Addis_Ababa_Population", dim: 1 },
  { l: 1, a: "right", icon: "grp", t: "Land Cover" },
  { l: 1, a: "right", icon: "grp", t: "SRTM_DEM" },
];

const LayerRow = ({ r }) => {
  const text = r.sel ? "font-bold text-[#e4f1fa] underline underline-offset-2" : r.dim ? "font-bold italic text-[#858585]" : r.b ? "font-bold text-black" : "text-[#1a1a1a]";
  return (
    <div className={"relative flex h-[19px] items-center overflow-hidden whitespace-nowrap " + (r.sel ? "bg-[#308cc6]" : "")}>
      {r.band ? (
        <>
          <div className={"ml-[63px] size-4 shrink-0 " + r.band} />
          <span className="ml-1.5">{r.t}</span>
        </>
      ) : (
        <>
          <div className={"flex w-5 shrink-0 justify-center " + (r.l === 2 ? "ml-5" : "")}>{r.a && <Tri dir={r.a} c={r.sel ? "#123" : "#5c5c5c"} />}</div>
          <Check on={r.on} className="ml-[3px]" />
          <div className="ml-1.5 flex w-4 shrink-0 justify-center">
            {r.icon === "box" ? <div className="size-4 border border-[#f79433] bg-white" /> : r.icon === "grp" ? <GroupIcon /> : <Checker dim={r.sel} />}
          </div>
          <span className={"ml-1.5 " + text}>{r.t}</span>
        </>
      )}
      {r.chip && (
        <div className="absolute top-px right-1 flex h-[17px] w-[18px] items-center justify-center rounded-xs bg-[#eeeeee]">
          <Chip />
        </div>
      )}
    </div>
  );
};

const Tab = ({ children, active, className }) => (
  <div className={"flex items-center justify-center rounded-b-[3px] border border-t-0 border-[#b4b4b4] pb-px " + (active ? "h-[27px] bg-[#f6f6f6] " : "h-[25px] bg-[#dcdcdc] ") + className}>{children}</div>
);

const LayersPanel = () => (
  <div className="flex w-[372px] shrink-0 flex-col pr-1.5 pl-px">
    <div className="flex h-[19px] items-center justify-between pr-[2px] pl-1">
      <span className="text-[13.300px]">Layers</span>
      <TitleButtons />
    </div>
    <div className="flex h-[31px] items-center pb-px pl-2">
      <S w={16} className="mr-[9px]"><path d="M1 11l6-5 8 8-4 7Z" fill="#f4c430" /><path d="M1 11l4-4 4 5-4 5Z" fill="#e33" /><path d="M5 17l5-4 2 4-2 4Z" fill="#6ab" /><path d="M10 8l6 7 4-4-5-6Z" fill="#e3a13a" stroke="#a86b10" /><path d="M16 9L23 2" stroke="#b06a2a" strokeWidth="3" /></S>
      <S w={16} className="mr-[10px]"><path d="M2 8h9v13H2ZM6 5h10v13H6Z" fill="#eee" stroke="#777" strokeWidth="1.400" /><path d="M11 2h9v14h-9Z" fill="#f4f4f4" stroke="#777" strokeWidth="1.400" /><path d="M14 5v9" stroke="#3c6690" strokeWidth="2" /><Plus /></S>
      <S w={18} className="mr-[8px]"><path d="M1 12C6 4 16 4 21 12C16 19 6 19 1 12Z" fill="#fff" stroke="#777" strokeWidth="1.600" /><circle cx="11" cy="12" r="4.500" fill="#5b84b5" stroke="#2d4a6a" /><circle cx="11" cy="12" r="1.800" fill="#111" /><path d="M15 20h8l-4 4Z" fill="#555" /></S>
      <S w={18} className="mr-[6px]"><path d="M1 2h18v4L12 13v10H8V13L1 6Z" fill="#5b8cc4" stroke="#34597f" /><path d="M1 1h18v4H1Z" fill="#ffe14d" stroke="#b99200" /><path d="M16 20h8l-4 4Z" fill="#555" /></S>
      <S w={16} className="opacity-35"><text x="7" y="16" fontSize="22" fontFamily="DejaVu Serif" fill="#777" textAnchor="middle">ε</text><path d="M12 23v-6a4 4 0 0 1 9 0v6" stroke="#777" strokeWidth="2.600" /></S>
      <div className="mr-[8px] ml-[5px] opacity-30"><Tri /></div>
      <S w={16} className="mr-[9px]"><path d="M2 2v20M2 4h7M2 20h7M2 2h10" stroke="#777" strokeWidth="1.500" /><path d="M5 9h5v5H5ZM5 16h5v5H5Z" stroke="#f08c1e" strokeWidth="2" /><path d="M14 1h5v13h4.500L16.500 22L10 14h4Z" fill="#5b8cc4" stroke="#2f5a8c" /></S>
      <S w={16} className="mr-[8px]"><path d="M2 2v20M2 4h7M2 20h7M2 2h10" stroke="#777" strokeWidth="1.500" /><path d="M5 9h5v5H5ZM5 16h5v5H5Z" stroke="#f08c1e" strokeWidth="2" /><path d="M14 22h5V10h4.500L16.500 1L10 10h4Z" fill="#5b8cc4" stroke="#2f5a8c" /></S>
      <S w={16}><rect x="2" y="2" width="17" height="17" fill="#f3f3f3" stroke="#777" strokeWidth="1.700" /><rect x="13" y="15" width="11" height="8" rx="2" fill="#e33a3a" /><path d="M15 19h7" stroke="#fff" strokeWidth="2" /></S>
    </div>
    <div className="flex h-[833px] flex-col border border-[#b4b4b4] bg-white">
      <div className="flex-1">{LAYERS.map((r, i) => <LayerRow key={i} r={r} />)}</div>
      <div className="flex h-[14px] border-t border-[#b4b4b4]">
        <div className="flex w-[14px] items-center justify-center border-r border-[#b4b4b4]"><Tri dir="left" /></div>
        <div className="flex-1 bg-linear-to-b from-white to-[#f3f3f3]" />
        <div className="w-[34px] border-x border-[#b4b4b4] bg-[#e4e4e4]" />
        <div className="flex w-[13px] items-center justify-center"><Tri dir="right" /></div>
      </div>
    </div>
    <div className="mt-px flex border-t border-[#b4b4b4] text-[13.200px] leading-none">
      <Tab active className="w-[67px]">Layers</Tab>
      <Tab className="-ml-px w-[79px]">Browser</Tab>
    </div>
  </div>
);

const SearchGlyph = () => (
  <S w={13} vb="0 0 13 13"><circle cx="5" cy="5" r="4.200" stroke="#8a8a8a" strokeWidth="1.200" /><path d="M8 8l4.500 4.500" stroke="#8a8a8a" strokeWidth="1.500" /></S>
);
const ClearGlyph = () => (
  <S w={13} h={11} vb="0 0 13 11"><path d="M4 .5H13V10.500H4L0 5.500Z" fill="#8f8f8f" /><path d="M5.500 3l5 5M10.500 3l-5 5" stroke="#fff" strokeWidth="1.300" /></S>
);

const QIcon = () => (
  <S w={15}><circle cx="11.500" cy="11.500" r="8.500" stroke="#7cab2b" strokeWidth="5" /><path d="M14 14l8.500 9" stroke="#589632" strokeWidth="5" /><path d="M8.500 8.500h5l3.500 4-4.500 4Z" fill="#f3dca8" /><circle cx="11.500" cy="11.500" r="2" fill="#ee7913" /></S>
);
const MergeIcon = () => (
  <S w={14} vb="0 0 14 16"><path d="M6 1.500L14 0L11 6L7.500 8.500L5 6Z" fill="#9a9a9a" stroke="#777" strokeWidth=".6" /><path d="M7 8v4" stroke="#777" strokeWidth="1.200" /><path d="M0 12.500h13v3H0Z" fill="#51759c" stroke="#34526f" strokeWidth=".6" /><path d="M6.500 10l1.800 2.500-1.800 2-1.800-2Z" fill="#f2e36a" /></S>
);
const VecIcon = () => (
  <S w={14} vb="0 0 14 14"><path d="M.5 6.500h7v7h-7ZM3.500 3.500h7v7h-7ZM6.500 .5h7v7h-7Z" fill="#ececec" stroke="#9a9a9a" /></S>
);
const GdalIcon = () => (
  <S w={16} vb="0 0 16 16"><circle cx="9.500" cy="8.500" r="6" fill="#5ec3e8" /><path d="M7 5l4-1 2 3-3 3-3-2Z" fill="#5a9a3c" /><path d="M0 5L7 0M3 5l3-1" stroke="#444" strokeWidth="1.300" /><text x="7.500" y="15.500" fontFamily="DejaVu Sans Condensed" fontWeight="bold" fontSize="7.500" textAnchor="middle" textLength="15" lengthAdjust="spacingAndGlyphs" fill="#000">GDAL</text></S>
);

const TOOLS = [
  { l: 1, icon: <Clock w={15} face="#b9d6ea" ring="#6f9cbc" />, t: "Recently used", sel: 1 },
  { l: 2, icon: <MergeIcon />, t: "Merge" },
  { l: 1, icon: <QIcon />, t: "Cartography" },
  { l: 2, icon: <Gear w={15} />, t: "Combine style databases" },
  { l: 1, icon: <QIcon />, t: "Database" },
  { l: 2, icon: <Gear w={15} />, t: "Package layers" },
  { l: 1, icon: <QIcon />, t: "Vector general" },
  { l: 2, icon: <VecIcon />, t: "Merge vector layers" },
  { l: 1, icon: <QIcon />, t: "Vector geometry" },
  { l: 2, icon: <Gear w={15} />, t: "Merge lines" },
  { l: 1, icon: <GdalIcon />, t: "GDAL" },
  { l: 1.5, t: "Raster miscellaneous" },
  { l: 3, icon: <MergeIcon />, t: "Merge" },
];

const ToolRow = ({ r }) => (
  <div className={"flex items-center whitespace-nowrap " + (r.l === 1.5 ? "h-[17px] " : r.l === 3 ? "h-[18px] " : "h-[19px] ") + (r.sel ? "bg-[#308cc6] text-[#e4f1fa]" : "")}>
    {r.l === 1 && <div className="flex w-[22px] shrink-0 justify-center pr-[3px]"><Tri c={r.sel ? "#123" : "#5c5c5c"} /></div>}
    {r.l === 1.5 && <div className="ml-[26px] mr-[9px] flex shrink-0 justify-center"><Tri /></div>}
    {r.l === 2 && <div className="w-[42px] shrink-0" />}
    {r.l === 3 && <div className="w-[62px] shrink-0" />}
    {r.icon && <div className="mr-1.5 flex w-[17px] shrink-0 justify-center">{r.icon}</div>}
    <span>{r.t}</span>
  </div>
);

const ProcessingPanel = () => (
  <div className="flex w-[542px] shrink-0 flex-col pl-1.5">
    <div className="flex h-[19px] items-center justify-between pr-[2px] pl-1">
      <span className="text-[13.300px]">Processing Toolbox</span>
      <TitleButtons />
    </div>
    <div className="flex h-[31px] items-center pb-px pl-[7px]">
      <div className="relative mr-[9px] size-[18px]">
        <Gear w={12} fill="#c22" stroke="#a11" />
        <div className="absolute top-[5px] left-[9px]"><Gear w={9} fill="#888" stroke="#777" /></div>
        <div className="absolute top-[10px] left-[4px]"><Gear w={8} fill="#8ab0e0" stroke="#8ab0e0" /></div>
        <div className="absolute top-[12px] left-[12px] origin-top-left scale-75"><Tri /></div>
      </div>
      <div className="relative mr-[7px]"><Python w={17} /><div className="absolute top-[11px] left-[11px] origin-top-left scale-75"><Tri /></div></div>
      <Clock w={17} />
      <S w={17} className="mr-[7px] ml-[7px] opacity-70"><Page x={5} y={2} w={15} h={20} /><path d="M8 9h8M8 12h9M8 15h9M8 18h6" stroke="#666" strokeWidth="1.400" /></S>
      <div className="mr-[8px] h-3 w-px bg-[#cfcfcf]" />
      <S w={16} className="opacity-45"><rect x="2" y="3" width="15" height="15" fill="#dcd8bc" stroke="#b0ac90" /><g transform="translate(6 2) scale(.85)"><Pencil /></g></S>
      <div className="mr-[6px] ml-[8px] h-3 w-px bg-[#cfcfcf]" />
      <S w={17}><Wrench /></S>
    </div>
    <div className="mr-px flex h-[25px] items-center rounded-t-xs border border-[#a8a8a8] bg-white pr-[7px] pl-[8px]">
      <SearchGlyph />
      <span className="ml-[7px] flex-1">merge</span>
      <ClearGlyph />
    </div>
    <div className="mr-px h-[808px] border border-[#b4b4b4] border-t-[#c8c8c8] bg-white">
      {TOOLS.map((r, i) => <ToolRow key={i} r={r} />)}
    </div>
    <div className="mt-px flex border-t border-[#b4b4b4] text-[13.200px] leading-none">
      <Tab className="w-[111px]">Layer Styling</Tab>
      <Tab active className="-ml-px w-[151px]">Processing Toolbox</Tab>
      <Tab className="-ml-px w-[93px]">Value Tool</Tab>
    </div>
  </div>
);

/* ---------- elevation raster ---------- */

let seed = 7;
const rnd = () => {
  seed = (seed * 16807) % 2147483647;
  return seed / 2147483647;
};

const pts = (s) => s.split(" ").map((p) => p.split(",").map(Number));
const line = (s) => "M" + s.split(" ").join("L");

const fringe = (s, len, step = 11) => {
  const p = pts(s);
  let d = "";
  for (let i = 0; i < p.length - 1; i++) {
    const [x0, y0] = p[i];
    const [x1, y1] = p[i + 1];
    const dist = Math.hypot(x1 - x0, y1 - y0);
    const a = Math.atan2(y1 - y0, x1 - x0);
    for (let t = 0; t < dist; t += step) {
      const x = x0 + ((x1 - x0) * t) / dist;
      const y = y0 + ((y1 - y0) * t) / dist;
      for (const side of [-1, 1]) {
        const l = len * (0.35 + rnd() * 0.8);
        const b = a + side * (0.9 + rnd() * 0.7);
        const c = b + (rnd() - 0.5) * 1.1;
        const mx = x + Math.cos(b) * l * 0.55;
        const my = y + Math.sin(b) * l * 0.55;
        d += `M${x.toFixed(1)} ${y.toFixed(1)}L${mx.toFixed(1)} ${my.toFixed(1)}L${(mx + Math.cos(c) * l * 0.45).toFixed(1)} ${(my + Math.sin(c) * l * 0.45).toFixed(1)}`;
      }
    }
  }
  return d;
};

const rays = (cx, cy, r, n) => {
  let d = "";
  for (let i = 0; i < n; i++) {
    const a = (i / n) * Math.PI * 2 + rnd() * 0.4;
    const l = r * (0.3 + rnd() * 0.75);
    const s = r * 0.2 * rnd();
    const k = a + (rnd() - 0.5) * 0.7;
    d += `M${(cx + Math.cos(a) * s).toFixed(1)} ${(cy + Math.sin(a) * s).toFixed(1)}L${(cx + Math.cos(a) * l * 0.6).toFixed(1)} ${(cy + Math.sin(a) * l * 0.6).toFixed(1)}L${(cx + Math.cos(k) * l).toFixed(1)} ${(cy + Math.sin(k) * l).toFixed(1)}`;
  }
  return d;
};

const MAIN = [
  "20,190 60,225 95,265 98,320 125,370 140,420 160,465 193,497",
  "193,497 215,490 250,437 285,425 350,433 437,452 470,485 520,530 590,537 640,572 700,583 720,630 745,680 795,695",
  "193,497 200,560 190,620 193,675 170,703 178,740 200,790 220,850 265,870 285,910",
  "1000,40 1050,60 1060,110 1052,185 1065,250 1100,320 1150,370 1200,405 1235,430",
];
const SIDE = [
  "795,695 830,668 880,660 930,690 955,695 958,740",
  "220,850 205,890 180,930", "193,675 240,725 290,760 350,770", "290,760 335,805", "170,703 120,703 60,680 20,640",
  "120,705 115,760 140,845", "95,265 150,265 230,245 330,220 375,208", "95,235 150,200 200,150 262,132",
  "130,275 160,320 230,335 300,340 345,325", "437,452 450,400 480,350 515,305", "437,452 400,500", "520,530 540,490 570,440 585,385",
  "590,537 620,500 640,450 680,435", "520,560 440,575 400,595 382,632", "510,560 530,610 560,650 568,700 590,760 625,815",
  "568,700 510,730 487,765", "568,700 585,800", "640,572 655,620 660,680", "700,583 700,540 692,500", "700,540 738,520",
  "880,660 900,630 955,622", "900,580 893,640", "830,595 840,650", "193,497 160,510 110,520 75,535", "215,490 270,520 298,560 290,610",
  "800,715 740,740 692,800", "800,720 760,780 745,815", "800,720 805,790 775,880", "800,720 835,770 850,820", "800,715 850,730 870,765",
  "1200,405 1230,352 1268,345", "1060,75 1110,105 1160,130 1210,150 1314,120", "20,40 60,70 110,100", "60,70 110,45", "578,30 582,80",
];
const THIN = [
  "920,30 925,100 915,180", "930,35 1000,45", "960,50 970,105", "840,40 800,80 745,110", "1052,185 1000,210 960,265",
  "958,740 1000,762 1045,755", "958,740 960,790", "1140,180 1140,245",
];
const GREY_B = [
  "820,550 835,600 880,630 970,635", "945,480 955,520 980,535", "1000,850 1010,940 1045,975 1070,955 1130,945 1180,970",
  "740,1464 750,1310 830,1250 930,1180 1000,1215 1060,1165 1150,1130", "620,990 680,1025", "640,540 700,550 810,540",
  "20,1035 90,1020 180,965 250,1005 360,1035 480,1045", "20,1140 60,1110 160,1130 220,1180 300,1222", "180,930 260,880 320,865",
  "420,640 385,710 400,790", "260,1060 310,1130", "370,1070 380,1120", "1030,190 1040,320", "1200,130 1210,90 1260,80", "480,710 540,720 580,725",
];
const MAIN_FR = MAIN.map((s) => fringe(s, 62, 7)).join("");
const SIDE_FR = SIDE.map((s) => fringe(s, 34, 7)).join("");
const B_FR = GREY_B.map((s) => fringe(s, 18, 14)).join("");
const EDGE = "690,1000 650,1050 655,1100 600,1160 560,1160 520,1120 450,1160 400,1200 385,1270 355,1310 355,1350 400,1400 420,1464";
const EDGE_FR = fringe(EDGE, 40, 8);
const NORTH_FR = fringe("20,1200 110,1185 180,1230 260,1250 330,1250 400,1260 450,1240 530,1240", 50, 7);
const SPURS = ["90,900 150,1010 210,1120 270,1200", "180,960 240,1060 290,1180", "300,900 340,1010 370,1110", "390,880 415,990 400,1120", "470,930 480,1040 500,1130", "560,940 545,1040 580,1130", "620,950 650,1040 700,1110", "800,870 790,970 770,1060", "900,830 900,920"];
const SPUR_FR = SPURS.map((s) => fringe(s, 34, 6)).join("");
const CRESTS = ["60,920 110,1020 170,1130", "230,920 300,1040 330,1130", "265,980 320,1110", "350,900 385,1000 390,1100", "440,950 450,1050 470,1130", "510,900 520,1000", "600,900 640,1000 670,1060", "720,860 730,960"];
const CREST_FR = CRESTS.map((s) => fringe(s, 24, 6)).join("");
const STARS = [[785, 1365, 80, 50], [905, 1480, 45, 30], [1265, 1465, 62, 40], [620, 1409, 22, 16], [640, 1588, 30, 20], [1070, 1625, 50, 30], [1240, 1745, 48, 34], [150, 1900, 85, 50], [1300, 2380, 40, 24], [520, 2130, 100, 60], [1100, 990, 180, 90], [690, 1065, 75, 36], [840, 310, 190, 110], [830, 250, 120, 50]];
const STAR_D = STARS.map(([x, y, r, n]) => rays(x, y, r, n)).join("");

const OUTLINE = "M905,68L925,55L945,48L985,48L1015,35L1030,45L1043,61L1062,57L1088,64L1118,61L1128,54L1152,54L1160,68L1163,95L1178,120L1190,150L1190,190L1180,222L1184,238L1178,247L1150,243L1128,239L1128,245L1155,268L1150,290L1153,300L1146,325L1138,314L1090,317L1086,370L1062,373L1050,379L1028,376L1020,350L998,353L984,340L981,291L968,289L948,267L930,263L915,240L901,240L896,220L885,213L850,205L847,197L868,193L872,183L862,155L882,150L884,130L890,112L902,98L902,75Z";

const Raster = () => (
  <svg width="434" height="868" viewBox="685 160 434 868" fill="none" className="block">
    <defs>
      <clipPath id="extent"><path d="M687 160H919V161H1118V1028H699V1027H685V834H686V463H687Z" /></clipPath>
      <filter id="broad" x="-20%" y="-20%" width="140%" height="140%">
        <feGaussianBlur stdDeviation="26" result="g" />
        <feTurbulence type="fractalNoise" baseFrequency="0.018" numOctaves="5" seed="21" />
        <feDisplacementMap in="g" scale="85" xChannelSelector="R" yChannelSelector="G" />
      </filter>
      <filter id="soft" x="-10%" y="-10%" width="120%" height="120%">
        <feGaussianBlur stdDeviation="12" result="g" />
        <feTurbulence type="fractalNoise" baseFrequency="0.040" numOctaves="4" seed="3" />
        <feDisplacementMap in="g" scale="40" xChannelSelector="R" yChannelSelector="G" />
      </filter>
      <filter id="valley" x="-10%" y="-10%" width="120%" height="120%">
        <feGaussianBlur stdDeviation="8" result="g" />
        <feTurbulence type="fractalNoise" baseFrequency="0.060" numOctaves="4" seed="8" />
        <feDisplacementMap in="g" scale="34" xChannelSelector="R" yChannelSelector="G" />
      </filter>
      <filter id="rough" x="-5%" y="-5%" width="110%" height="110%">
        <feGaussianBlur stdDeviation="2.600" result="g" />
        <feTurbulence type="fractalNoise" baseFrequency="0.09" numOctaves="4" seed="4" />
        <feDisplacementMap in="g" scale="16" xChannelSelector="R" yChannelSelector="G" />
      </filter>
      <filter id="fine" x="-5%" y="-5%" width="110%" height="110%">
        <feTurbulence type="fractalNoise" baseFrequency="0.060" numOctaves="3" seed="9" result="n" />
        <feDisplacementMap in="SourceGraphic" in2="n" scale="14" xChannelSelector="R" yChannelSelector="G" />
        <feGaussianBlur stdDeviation="0.900" />
      </filter>
      <filter id="grain" x="0" y="0" width="100%" height="100%">
        <feTurbulence type="fractalNoise" baseFrequency="0.060 0.045" numOctaves="5" seed="12" />
        <feColorMatrix type="matrix" values="1.500 0 0 0 -.25  1.500 0 0 0 -.25  1.500 0 0 0 -.25  0 0 0 0 1" />
      </filter>
      <linearGradient id="base" x1="0" y1="0" x2="0" y2="1">
        <stop offset="0" stopColor="#8e8e8e" /><stop offset=".2" stopColor="#9a9a9a" /><stop offset=".34" stopColor="#a4a4a4" />
        <stop offset=".41" stopColor="#9a9a9a" /><stop offset=".5" stopColor="#727272" /><stop offset=".65" stopColor="#6b6b6b" />
        <stop offset=".75" stopColor="#747474" /><stop offset="1" stopColor="#606060" />
      </linearGradient>
    </defs>
    <g clipPath="url(#extent)">
      <rect x="685" y="160" width="434" height="868" fill="url(#base)" />
      <g transform="translate(680 150) scale(.33333)" strokeLinecap="round" strokeLinejoin="round">
        <g filter="url(#broad)">
          <path d="M-40 -40H340L250 80L120 130L-40 170Z" fill="#3a3a3a" />
          <path d="M520 -40H720L690 230L640 280L540 230Z" fill="#747474" />
          <path d="M720 -40H1360V280L1200 280L1130 230L1060 310L960 270L900 190L700 160Z" fill="#5c5c5c" />
          <path d="M1120 60H1360V300L1200 270Z" fill="#262626" />
          <ellipse cx="835" cy="300" rx="150" ry="120" fill="#aeaeae" />
          <ellipse cx="840" cy="310" rx="80" ry="70" fill="#c6c6c6" />
          <path d="M780 400L900 380L880 560L800 600Z" fill="#a8a8a8" />
          <path d="M980 430H1360V800L1040 700Z" fill="#9d9d9d" />
          <path d="M1130 260L1210 270L1220 350L1180 360Z" fill="#aaa" />
          <path d="M-20 960L140 1000L260 1150L220 1220L-20 1190Z" fill="#b4b4b4" />
          <path d="M120 860L420 880L620 940L720 1080L660 1180L300 1190L220 1080Z" fill="#a8a8a8" />
          <ellipse cx="1100" cy="990" rx="70" ry="80" fill="#b8b8b8" />
          <path d="M1070 1000H1130V1230H1010L1075 1180Z" fill="#bbb" />
          <path d="M1220 1090L1360 1010V1090Z" fill="#d4d4d4" />
          <ellipse cx="690" cy="1070" rx="55" ry="32" fill="#bcbcbc" />
          <path d="M740 1080L1060 1060L1060 1200L880 1250L740 1240Z" fill="#a0a0a0" />
          <path d="M560 1130L700 1130L740 1300L620 1330Z" fill="#8b8b8b" />
          <path d="M1130 1130H1360V1420H1180Z" fill="#888" />
          <path d="M900 1250H1170L1190 1400L1050 1540L960 1450L860 1370Z" fill="#777" />
          <path d="M-40 1290L300 1300L620 1290L840 1430L840 1800L660 1850L300 1840L160 1620L130 1450L-40 1420Z" fill="#676767" />
          <path d="M-40 1250L200 1240L620 1260L600 1330L200 1340L-40 1330Z" fill="#7c7c7c" />
          <path d="M-40 1390L140 1380L150 1600L100 1780L-40 1790Z" fill="#858585" />
          <path d="M-40 1460L50 1480L90 1560L40 1700L-40 1760Z" fill="#a4a4a4" />
          <path d="M-40 1780L230 1800L420 1880L480 2000L300 2060L-40 2000Z" fill="#777" />
          <ellipse cx="150" cy="1905" rx="65" ry="50" fill="#979797" />
          <path d="M1360 1480L1120 1600L980 1720L960 1850L920 2080L700 2290L560 2500L500 2740H1360Z" fill="#4d4d4d" />
          <path d="M1360 1850L1200 1990L1150 2300L1000 2500L900 2740H1360Z" fill="#3b3b3b" />
          <path d="M700 1860L880 1830L930 1900L900 2060L740 2140L640 2070Z" fill="#838383" />
          <path d="M700 1850L660 1900L640 1980L580 2060L640 2130L520 2290L400 2350L340 2480L430 2740H-40V2440L160 2300L300 2260L460 2210L470 2060L480 1960L580 1870Z" fill="#b0b0b0" />
          <path d="M700 1860L600 1950L540 2080L520 2150L490 1980L600 1880Z" fill="#c6c6c6" />
          <path d="M460 2230L370 2370L340 2480L300 2620L120 2680L40 2580L160 2430L280 2260Z" fill="#dedede" />
          <path d="M240 2040L440 2000L450 2180L320 2200L190 2120Z" fill="#a2a2a2" />
          <path d="M-40 2230L160 2180L250 2330L190 2400L-40 2380Z" fill="#848484" />
          <path d="M-40 2110L180 2050L170 2160L-40 2200Z" fill="#6e6e6e" />
          <path d="M-40 2440L110 2460L70 2520L-40 2530Z" fill="#989898" />
          <path d="M620 1910L760 1960L720 2070L600 2100L560 2060Z" fill="#999" />
          <ellipse cx="785" cy="1365" rx="55" ry="45" fill="#999" />
          <ellipse cx="905" cy="1480" rx="35" ry="25" fill="#8f8f8f" />
          <ellipse cx="1265" cy="1465" rx="50" ry="30" fill="#939393" />
          <ellipse cx="1240" cy="1745" rx="40" ry="30" fill="#7c7c7c" />
          <ellipse cx="880" cy="1640" rx="60" ry="40" fill="#7c7c7c" />
        </g>
        <g filter="url(#soft)">
          <path d="M700 2170L650 2240L600 2330L480 2320L410 2380L390 2450L400 2560L430 2740H640L720 2400L760 2230Z" fill="#606060" />
          <path d="M700 2170L900 2080L880 2190L770 2320L690 2320Z" fill="#606060" />
          <path d="M740 2640L760 2480L880 2390L900 2420L830 2640Z" fill="#5a5a5a" />
          <ellipse cx="1127" cy="1928" rx="44" ry="42" fill="#9a9a9a" />
          <ellipse cx="1125" cy="2010" rx="18" ry="22" fill="#777" />
          <ellipse cx="46" cy="1540" rx="48" ry="44" fill="#bdbdbd" />
          <ellipse cx="785" cy="1362" rx="34" ry="28" fill="#c2c2c2" />
          <ellipse cx="905" cy="1480" rx="18" ry="12" fill="#b5b5b5" />
          <ellipse cx="520" cy="2128" rx="44" ry="26" fill="#ededed" />
          <ellipse cx="490" cy="2265" rx="40" ry="24" fill="#e6e6e6" />
          <ellipse cx="155" cy="1905" rx="30" ry="24" fill="#b4b4b4" />
          <ellipse cx="843" cy="322" rx="34" ry="28" fill="#e4e4e4" />
          <path d="M660 1840L720 1840L640 1910L560 2060L530 2100L560 1990Z" fill="#c8c8c8" />
        </g>
        <ellipse cx="1127" cy="1928" rx="22" ry="20" fill="#e6e6e6" filter="url(#valley)" />
        <path d="M20 1512L55 1512L74 1522L82 1540L74 1560L50 1572H18V1512Z" fill="#9c9c9c" />
        <ellipse cx="22" cy="1655" rx="24" ry="30" fill="#a2a2a2" opacity=".5" />

        <g filter="url(#rough)">
          <path d={STAR_D} stroke="#dcdcdc" strokeWidth="5" opacity=".24" />
          <path d="M1100 990L1090 1180M1095 1050L1060 1090M1097 1100L1150 1080M1095 1140L1150 1130" stroke="#ddd" strokeWidth="9" opacity=".35" />
          <path d={CREST_FR} stroke="#c4c4c4" strokeWidth="5" opacity=".36" />
          <path d={SPUR_FR} stroke="#8c8c8c" strokeWidth="5" opacity=".32" />
          <path d={NORTH_FR} stroke="#7c7c7c" strokeWidth="8" opacity=".5" />
          <path d="M45 1170L110 1150M60 1180L170 1150" stroke="#888" strokeWidth="10" opacity=".5" />
        </g>
        <g filter="url(#valley)">
          <path d="M780 2290q50 -30 80 -90t60 -110M770 2220q50 -50 80 -120M830 2250q40 -50 80 -140M740 2290q50 -50 80 -100M720 2040q80 -80 170 -120M760 2090q80 -60 140 -150" stroke="#b0b0b0" strokeWidth="11" opacity=".4" />
        </g>
        <g filter="url(#rough)" transform="translate(0 1170)">
          <path d={EDGE_FR} stroke="#606060" strokeWidth="7" opacity=".6" />
          <path d={B_FR} stroke="#4a4a4a" strokeWidth="4" opacity=".16" />
        </g>

        <g filter="url(#soft)" opacity=".5">
          {MAIN.map((s) => <path key={s} d={line(s)} stroke="#505050" strokeWidth="125" />)}
          {SIDE.map((s) => <path key={s} d={line(s)} stroke="#5a5a5a" strokeWidth="62" />)}
        </g>
        <g filter="url(#valley)" opacity=".7">
          {MAIN.map((s) => <path key={s} d={line(s)} stroke="#484848" strokeWidth="78" />)}
          {SIDE.map((s) => <path key={s} d={line(s)} stroke="#4e4e4e" strokeWidth="44" />)}
        </g>
        <g filter="url(#rough)" opacity=".3">
          <path d={MAIN_FR} stroke="#444" strokeWidth="8" />
          <path d={SIDE_FR} stroke="#444" strokeWidth="7" />
        </g>
        <g filter="url(#valley)" opacity=".75">
          {MAIN.map((s) => <path key={s} d={line(s)} stroke="#242424" strokeWidth="28" />)}
          {SIDE.map((s) => <path key={s} d={line(s)} stroke="#323232" strokeWidth="15" />)}
        </g>
        <g filter="url(#rough)">
          <path d="M20 30H120L60 110H20ZM20 180L60 200L100 250L70 270L20 220Z" fill="#121212" opacity=".85" />
          <path d="M20 850L60 880L40 930H20ZM20 980L38 1000L30 1080H18Z" fill="#6a6a6a" opacity=".8" />
        </g>
        <g filter="url(#soft)">
          <path d="M195 370L195 440M245 560L238 605M610 620L625 720M560 600L590 640M120 160L190 125M30 440L40 600" stroke="#b4b4b4" strokeWidth="18" opacity=".45" />
        </g>
        <g filter="url(#fine)">
          <path d={MAIN_FR} stroke="#2c2c2c" strokeWidth="2.500" opacity=".24" />
          <path d={SIDE_FR} stroke="#2c2c2c" strokeWidth="2.200" opacity=".22" />
          {MAIN.map((s) => <path key={s} d={line(s)} stroke="#141414" strokeWidth="6" />)}
          {SIDE.map((s) => <path key={s} d={line(s)} stroke="#242424" strokeWidth="3.500" opacity=".8" />)}
          {THIN.map((s) => <path key={s} d={line(s)} stroke="#333" strokeWidth="5" opacity=".7" />)}
          <path d="M1000 650V592L1025 588" stroke="#777" strokeWidth="4" opacity=".7" />
          <g transform="translate(0 1170)">
            {GREY_B.map((s) => <path key={s} d={line(s)} stroke="#444" strokeWidth="4" opacity=".35" />)}
          </g>
        </g>
      </g>
      <rect x="685" y="160" width="434" height="868" filter="url(#grain)" opacity=".04" />
    </g>
    <g transform="translate(680 540) scale(.33333)">
      <path d={OUTLINE} fill="none" stroke="#ff7f00" strokeWidth="5" strokeLinejoin="round" />
    </g>
  </svg>
);

/* ---------- status bar ---------- */

const Spin = ({ children, className }) => (
  <div className={"flex h-6 items-center rounded-xs border border-[#a8a8a8] bg-white pl-1 " + className}>
    <span className="flex-1">{children}</span>
    <div className="flex h-full w-[14px] flex-col items-center justify-between border-l border-[#c4c4c4] bg-[#f4f4f4] py-0.5"><Tri dir="up" /><Tri /></div>
  </div>
);

const StatusBar = () => (
  <div className="flex h-[31px] shrink-0 items-center pl-1 text-[11px]">
    <div className="flex h-[25px] w-[270px] items-center rounded-[3px] border border-[#a8a8a8] bg-white px-2 text-[13px]">
      <SearchGlyph />
      <span className="ml-2 flex-1">merge</span>
      <ClearGlyph />
    </div>
    <div className="ml-[751px] w-[64px]">Coordinate</div>
    <div className="flex h-[22px] w-[111px] items-center justify-center rounded-xs border border-[#a8a8a8] bg-white">533542,1023843</div>
    <S w={15} className="ml-[4px]"><ellipse cx="10" cy="8" rx="5" ry="7" fill="#fff" stroke="#222" strokeWidth="2.500" transform="rotate(-25 10 8)" /><ellipse cx="15" cy="16" rx="5" ry="6" fill="#999" stroke="#222" strokeWidth="2.500" transform="rotate(-25 15 16)" /><path d="M10 2v12M3 20l6-8M17 3l4-2M3 6l14 14" stroke="#222" strokeWidth="2" /></S>
    <div className="ml-[14px] w-[34px]">Scale</div>
    <div className="flex h-6 w-[96px] items-center rounded-xs border border-[#a8a8a8] bg-white pl-[3px]">
      <span className="flex-1">1:965138</span>
      <div className="flex h-full w-[20px] items-center justify-center border-l border-[#c4c4c4] bg-[#f6f6f6]"><Tri /></div>
    </div>
    <S w={14} h={17} vb="0 0 14 17" className="ml-[11px]"><path d="M3.500 8V5a3.500 3.500 0 0 1 7 0v3" stroke="#777" strokeWidth="1.300" /><rect x="1" y="7.500" width="12" height="8.500" rx="1" fill="#666" /></S>
    <div className="ml-2 w-[55px]">Magnifier</div>
    <Spin className="w-[98px]">100%</Spin>
    <div className="ml-[9px] w-[56px]">Rotation</div>
    <Spin className="w-[94px]">0.0 °</Spin>
    <Check on className="ml-[6px]" />
    <div className="ml-[5px] w-[56px]">Render</div>
    <S w={15}><circle cx="12" cy="12" r="10.500" fill="#aaa" stroke="#777" strokeWidth="1.500" /><path d="M12 1v22M1 12h22M4 6h16M4 18h16M12 1C4 7 4 17 12 23M12 1c8 6 8 16 0 22" stroke="#666" strokeWidth="1.500" /></S>
    <div className="ml-0.5 w-[91px]">EPSG:20137</div>
    <S w={16} h={15} vb="0 0 16 15"><path d="M8 0C12.500 0 16 2.500 16 6.500S13 12.800 11.500 12.800L12 15L8 13C3.500 13 0 10.500 0 6.500S3.500 0 8 0Z" fill="#5e5e5e" /><path d="M3.500 6.500h2M7 6.500h2M10.500 6.500h2" stroke="#fff" strokeWidth="1.800" /></S>
  </div>
);

/* ---------- window ---------- */

export default function App() {
  return (
    <div className="flex h-[1082px] w-[1922px] flex-col overflow-hidden border border-[#9a9a9a] bg-[#efefef] font-['DejaVu_Sans',sans-serif] text-[13px] leading-[19px] text-[#111]">
      <div className="flex h-[37px] shrink-0 items-center border-b border-[#1f1f1f] bg-[#363636]">
        <div className="w-[90px]" />
        <div className="flex-1 text-center font-['Noto_Sans',sans-serif] text-[12.400px] font-semibold text-[#f2f2f2]">*fb-d4g-module9-eth — QGIS</div>
        <div className="flex w-[90px] items-center">
          <div className="mt-1.5 h-0.5 w-2 bg-white" />
          <div className="ml-[27px] size-1.5 border-2 border-white" />
          <S w={19} className="ml-[21px]" vb="0 0 19 19"><circle cx="9.500" cy="9.500" r="9.300" fill="#f68b28" /><path d="M6.300 6.300l6.400 6.400M12.700 6.300l-6.400 6.400" stroke="#fff" strokeWidth="2.400" /></S>
        </div>
      </div>
      <div className="flex h-[22px] shrink-0 items-center border-b border-[#d0d0d0] pl-[9.500px] text-[13.300px]">
        {MENU.map(([a, u, b, w]) => (
          <span key={u + b} className={"shrink-0 pt-px " + w}>{a}<span className="underline underline-offset-[3px]">{u}</span>{b}</span>
        ))}
      </div>
      <Bar items={ROW1} />
      <Bar items={ROW2} />
      <div className="flex h-[912px] shrink-0">
        <SideBar />
        <LayersPanel />
        <div className="flex flex-1 items-start border border-[#b4b4b4] bg-white pt-[21px] pl-[260px]">
          <Raster />
        </div>
        <ProcessingPanel />
      </div>
      <StatusBar />
    </div>
  );
}
